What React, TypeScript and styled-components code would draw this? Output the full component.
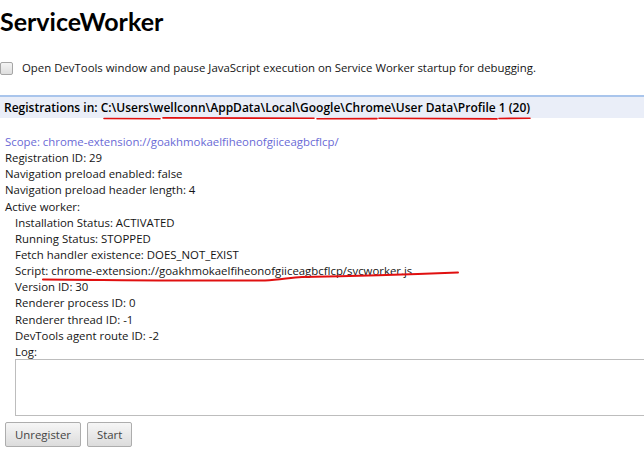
import React from "react";
import styled, { createGlobalStyle } from "styled-components";

const Global = createGlobalStyle`
  html, body { margin: 0; padding: 0; background: #fff; }
  body {
    font-family: "Open Sans", "Noto Sans", "Liberation Sans", sans-serif;
    font-size: 11.4px;
    color: #151515;
  }
`;

const Page = styled.div`
  position: relative;
  width: 644px;
  height: 452px;
  overflow: hidden;
`;

const Title = styled.h1`
  margin: 0;
  padding: 6px 0 0 0;
  font-family: Lato, "Open Sans", sans-serif;
  font-size: 25px;
  line-height: 30px;
  font-weight: 700;
  color: #000;
`;

const OptionRow = styled.label`
  display: flex;
  align-items: center;
  gap: 9px;
  margin-top: 24px;
  height: 16px;
  line-height: 16px;
`;

const Check = styled.span`
  width: 11px;
  height: 11px;
  border: 1px solid #a6a6a6;
  border-radius: 2px;
  background: linear-gradient(#f4f4f4, #dedede);
  flex: none;
`;

const RegHeader = styled.div`
  margin-top: 19px;
  border-top: 2px solid #a9c5ec;
  background: #eaeef8;
  height: 21px;
  line-height: 21px;
  padding-left: 4px;
  font-size: 12px;
  font-weight: 600;
  color: #000;
`;

const Registration = styled.div`
  padding: 16px 0 0 5px;
`;

const Line = styled.div<{ $indent?: boolean; $scope?: boolean }>`
  line-height: 16.15px;
  height: 16.15px;
  white-space: nowrap;
  padding-left: ${(p) => (p.$indent ? "10px" : "0")};
  color: ${(p) => (p.$scope ? "#6a6ad6" : "#151515")};
`;

const LogBox = styled.div`
  margin: -1px 0 0 10px;
  height: 55px;
  border: 1px solid #bdbdbd;
  border-right: none;
  background: #fff;
`;

const Buttons = styled.div`
  display: flex;
  gap: 6px;
  margin-top: 6px;
`;

const Button = styled.button`
  height: 25px;
  padding: 0 9px;
  font-family: inherit;
  font-size: 11.4px;
  color: #444;
  border: 1px solid #adadad;
  border-radius: 2px;
  background: linear-gradient(#f6f6f6, #dcdcdc);
`;

const Annot = styled.svg`
  position: absolute;
  left: 0;
  top: 0;
  pointer-events: none;
`;

export default function App() {
  const red = "#e01010";
  return (
    <Page>
      <Global />
      <Title>ServiceWorker</Title>
      <OptionRow>
        <Check />
        <span>Open DevTools window and pause JavaScript execution on Service Worker startup for debugging.</span>
      </OptionRow>
      <RegHeader>
        Registrations in: C:\Users\wellconn\AppData\Local\Google\Chrome\User Data\Profile 1 (20)
      </RegHeader>
      <Registration>
        <Line $scope>Scope: chrome-extension://goakhmokaelfiheonofgiiceagbcflcp/</Line>
        <Line>Registration ID: 29</Line>
        <Line>Navigation preload enabled: false</Line>
        <Line>Navigation preload header length: 4</Line>
        <Line>Active worker:</Line>
        <Line $indent>Installation Status: ACTIVATED</Line>
        <Line $indent>Running Status: STOPPED</Line>
        <Line $indent>Fetch handler existence: DOES_NOT_EXIST</Line>
        <Line $indent>Script: chrome-extension://goakhmokaelfiheonofgiiceagbcflcp/svcworker.js</Line>
        <Line $indent>Version ID: 30</Line>
        <Line $indent>Renderer process ID: 0</Line>
        <Line $indent>Renderer thread ID: -1</Line>
        <Line $indent>DevTools agent route ID: -2</Line>
        <Line $indent>Log:</Line>
        <LogBox />
        <Buttons>
          <Button>Unregister</Button>
          <Button>Start</Button>
        </Buttons>
      </Registration>
      <Annot width="644" height="452" viewBox="0 0 644 452">
        <g fill="none" stroke={red} strokeWidth="1.6" strokeLinecap="round">
          <path d="M104 118.5 L160 118.8 M163 117.9 L314 118.3 M317 118.8 L377 118.6 M379 118.2 L497 118.9 M499 118.5 L530 118.2" />
          <path d="M43 279.5 C120 280, 200 281, 265 280.5 C280 280, 290 277.5, 302 277 C360 276, 420 274, 458 272.5" strokeWidth="2" />
        </g>
      </Annot>
    </Page>
  );
}
